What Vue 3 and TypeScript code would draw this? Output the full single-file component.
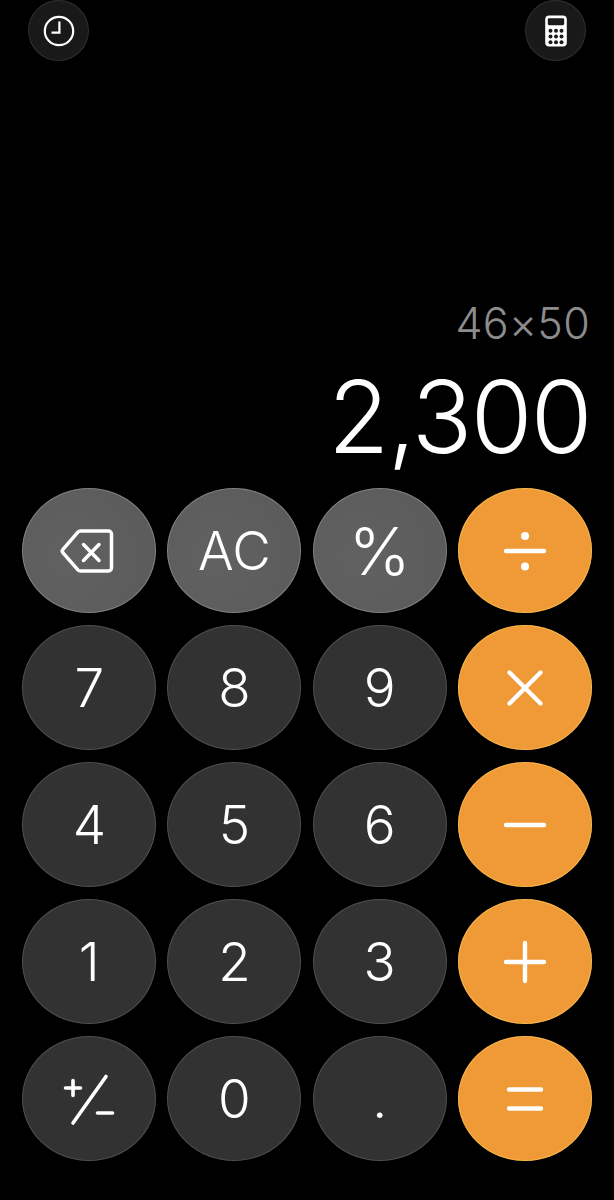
<script setup lang="ts">
type KeyKind = 'func' | 'num' | 'op'

interface CalcKey {
  id: string
  kind: KeyKind
  label?: string
  icon?: 'back' | 'div' | 'mul' | 'sub' | 'add' | 'eq' | 'sign'
}

const keys: CalcKey[] = [
  { id: 'back', kind: 'func', icon: 'back' },
  { id: 'ac', kind: 'func', label: 'AC' },
  { id: 'pct', kind: 'func', label: '%' },
  { id: 'div', kind: 'op', icon: 'div' },
  { id: '7', kind: 'num', label: '7' },
  { id: '8', kind: 'num', label: '8' },
  { id: '9', kind: 'num', label: '9' },
  { id: 'mul', kind: 'op', icon: 'mul' },
  { id: '4', kind: 'num', label: '4' },
  { id: '5', kind: 'num', label: '5' },
  { id: '6', kind: 'num', label: '6' },
  { id: 'sub', kind: 'op', icon: 'sub' },
  { id: '1', kind: 'num', label: '1' },
  { id: '2', kind: 'num', label: '2' },
  { id: '3', kind: 'num', label: '3' },
  { id: 'add', kind: 'op', icon: 'add' },
  { id: 'sign', kind: 'num', icon: 'sign' },
  { id: '0', kind: 'num', label: '0' },
  { id: 'dot', kind: 'num', label: '.' },
  { id: 'eq', kind: 'op', icon: 'eq' }
]

const dots = [
  [9.5, 17.8],
  [15, 17.8],
  [20.5, 17.8],
  [9.5, 23.5],
  [15, 23.5],
  [20.5, 23.5],
  [9.5, 29.2],
  [15, 29.2],
  [20.5, 29.2]
]
</script>

<template>
  <main class="calc">
    <header class="top">
      <button class="round" aria-label="History">
        <svg width="36" height="36" viewBox="0 0 36 36" fill="none" stroke="#fff" stroke-width="2.2">
          <circle cx="18" cy="18" r="14.2" />
          <path d="M18.4 8.5V19.6H10.5" />
        </svg>
      </button>
      <button class="round" aria-label="Calculator">
        <svg width="30" height="36" viewBox="0 0 30 36" fill="none">
          <rect x="4.2" y="2.5" width="21.6" height="31" rx="4" fill="#fff" />
          <rect x="6.8" y="5.2" width="16.4" height="7" rx="1.4" fill="#1a1a1a" />
          <circle v-for="(d, i) in dots" :key="i" :cx="d[0]" :cy="d[1]" r="2" fill="#1a1a1a" />
        </svg>
      </button>
    </header>

    <section class="display">
      <div class="expr">46×50</div>
      <div class="result">2,300</div>
    </section>

    <section class="keys">
      <button
        v-for="key in keys"
        :key="key.id"
        class="key"
        :class="[key.kind, { pct: key.id === 'pct' }]"
        :aria-label="key.icon"
      >
        <template v-if="key.label">{{ key.label }}</template>
        <svg
          v-else
          width="60"
          height="60"
          viewBox="0 0 60 60"
          fill="none"
          stroke="#fff"
          stroke-width="4.4"
          stroke-linecap="round"
          stroke-linejoin="round"
        >
          <template v-if="key.icon === 'back'">
            <path
              stroke-width="3.5"
              d="M21.5 10H49.5a3 3 0 0 1 3 3V47a3 3 0 0 1-3 3H21.5a3.5 3.5 0 0 1-2.6-1.1L4 31.8a2.5 2.5 0 0 1 0-3.4L18.9 11.1A3.5 3.5 0 0 1 21.5 10Z"
            />
            <path stroke-width="3.5" d="M24.5 23.5 40 39.5M40 23.5 24.5 39.5" />
          </template>
          <template v-else-if="key.icon === 'div'">
            <path d="M11 30H49" />
            <circle cx="30" cy="15" r="4" fill="#fff" stroke="none" />
            <circle cx="30" cy="45.5" r="4" fill="#fff" stroke="none" />
          </template>
          <path v-else-if="key.icon === 'mul'" d="M14.5 14.5 45.5 45.5M45.5 14.5 14.5 45.5" />
          <path v-else-if="key.icon === 'sub'" d="M11 30H49" />
          <path v-else-if="key.icon === 'add'" d="M11 30H49M30 11V49" />
          <path v-else-if="key.icon === 'eq'" d="M14 20.5H46M14 39.5H46" />
          <template v-else-if="key.icon === 'sign'">
            <path stroke-width="3.6" d="M47 7.5 14 54" />
            <path stroke-width="3.6" d="M6.5 19H21.5M14 11.5V26.5" />
            <path stroke-width="3.6" d="M38.5 44H53.5" />
          </template>
        </svg>
      </button>
    </section>
  </main>
</template>

<style scoped>
.calc {
  width: 614px;
  height: 1200px;
  background: #000;
  color: #fff;
  font-family: Inter, "Liberation Sans", sans-serif;
  display: flex;
  flex-direction: column;
  overflow: hidden;
}

.top {
  display: flex;
  justify-content: space-between;
  padding: 0 28px;
}

.round {
  width: 61px;
  height: 61px;
  padding: 0;
  border: none;
  border-radius: 50%;
  background: #191919;
  box-shadow: inset 0 0 0 1px rgba(255, 255, 255, 0.1);
  display: flex;
  align-items: center;
  justify-content: center;
}

.display {
  padding: 237px 24px 0 0;
  text-align: right;
}

.expr {
  font-size: 43px;
  line-height: 50px;
  font-weight: 300;
  letter-spacing: 0.3px;
  color: #8c8c8c;
}

.result {
  margin-top: 11px;
  margin-right: -1px;
  font-size: 100px;
  line-height: 116px;
  font-weight: 300;
  letter-spacing: -1.6px;
}

.keys {
  margin-top: 13px;
  padding-left: 22.3px;
  display: grid;
  grid-template-columns: repeat(4, 134px);
  grid-auto-rows: 125px;
  column-gap: 11.2px;
  row-gap: 12px;
}

.key {
  padding: 0;
  border: none;
  border-radius: 50%;
  color: #fff;
  font-family: inherit;
  font-size: 53px;
  font-weight: 350;
  display: flex;
  align-items: center;
  justify-content: center;
}

.pct {
  font-size: 66px;
}

.func {
  background: radial-gradient(circle at 35% 55%, #616161, #5a5a5a);
  box-shadow: inset 0 0 0 1px rgba(255, 255, 255, 0.22);
}

.num {
  background: #323232;
  box-shadow: inset 0 0 0 1px rgba(255, 255, 255, 0.14);
}

.op {
  background: #ef9a37;
  box-shadow: inset 0 0 0 1px rgba(255, 205, 90, 0.55);
}
</style>
